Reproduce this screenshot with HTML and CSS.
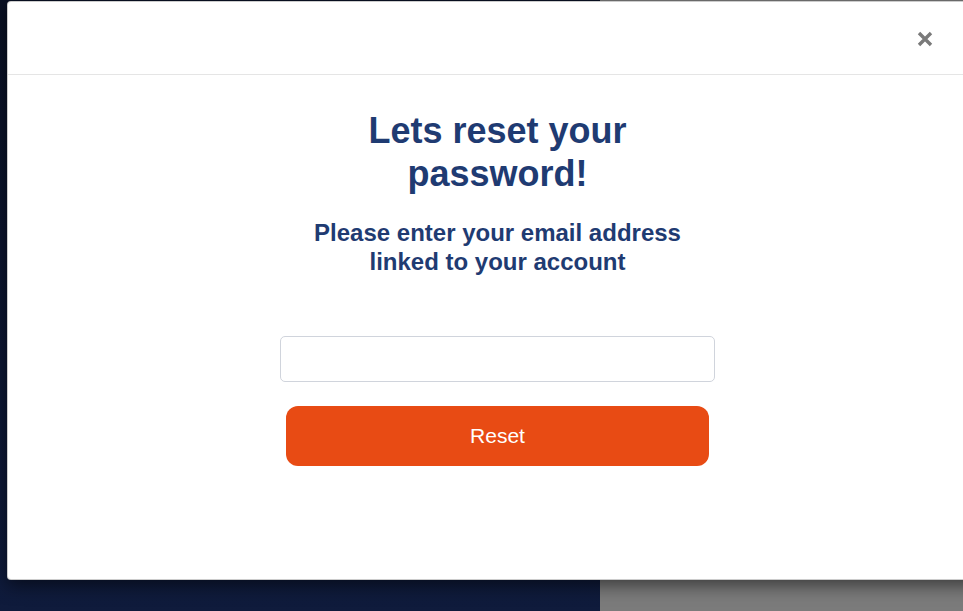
FILE: index.html
```html
<!DOCTYPE html>
<html lang="en">
<head>
<meta charset="utf-8">
<title>Reset password</title>
<link rel="stylesheet" href="styles.css">
</head>
<body>
<div class="page">
  <aside class="side"></aside>
  <main class="backdrop"></main>
</div>
<div class="modal">
  <div class="modal-header">
    <button class="close" type="button" aria-label="Close">
      <svg width="16" height="16" viewBox="0 0 16 16"><path d="M2 2 L14 14 M14 2 L2 14" stroke="#7a7a7a" stroke-width="3.4" stroke-linecap="butt" fill="none"/></svg>
    </button>
  </div>
  <div class="modal-body">
    <h1 class="title">Lets reset your password!</h1>
    <p class="subtitle">Please enter your email address linked to your account</p>
    <form class="form">
      <input class="email" type="email" aria-label="Email">
      <button class="reset" type="button">Reset</button>
    </form>
  </div>
</div>
</body>
</html>
```

FILE: styles.css
```css
html, body {
  margin: 0;
  padding: 0;
  height: 100%;
  overflow: hidden;
}
body {
  font-family: "Liberation Sans", Arial, sans-serif;
}
.page {
  display: flex;
  height: 100vh;
}
.side {
  width: 600px;
  flex: none;
  background: linear-gradient(180deg, #0a1124 0%, #0d1734 60%, #0f1b3c 100%);
}
.backdrop {
  flex: 1;
  background: #7b7b7b;
}
.modal {
  position: absolute;
  left: 7px;
  top: 1px;
  width: 981px;
  height: 579px;
  box-sizing: border-box;
  background: #fff;
  border: 1px solid rgba(0, 0, 0, 0.2);
  border-radius: 4px;
  box-shadow: 0 5px 18px rgba(0, 0, 0, 0.55);
  display: flex;
  flex-direction: column;
}
.modal-header {
  height: 72px;
  border-bottom: 1px solid #e5e5e5;
  display: flex;
  align-items: center;
  justify-content: flex-end;
  padding-right: 54px;
  flex: none;
}
.close {
  border: 0;
  background: none;
  padding: 0;
  width: 16px;
  height: 16px;
  display: flex;
  cursor: pointer;
  margin-top: 1px;
}
.modal-body {
  display: flex;
  flex-direction: column;
  align-items: center;
  padding-top: 34px;
}
.title {
  margin: 0;
  width: 420px;
  text-align: center;
  font-size: 36px;
  line-height: 43px;
  font-weight: 700;
  color: #1f3b72;
}
.subtitle {
  margin: 23px 0 0;
  width: 420px;
  text-align: center;
  font-size: 24px;
  line-height: 29px;
  font-weight: 700;
  color: #1f3b72;
}
.form {
  margin-top: 60px;
  display: flex;
  flex-direction: column;
  align-items: center;
}
.email {
  width: 435px;
  height: 46px;
  box-sizing: border-box;
  border: 1px solid #d0d4dc;
  border-radius: 5px;
  padding: 0 12px;
  font: 16px "Liberation Sans", Arial, sans-serif;
  outline: none;
}
.reset {
  margin-top: 24px;
  width: 423px;
  height: 60px;
  border: 0;
  border-radius: 12px;
  background: #e84b14;
  color: #fff;
  font: 21px "Liberation Sans", Arial, sans-serif;
  cursor: pointer;
}
```
